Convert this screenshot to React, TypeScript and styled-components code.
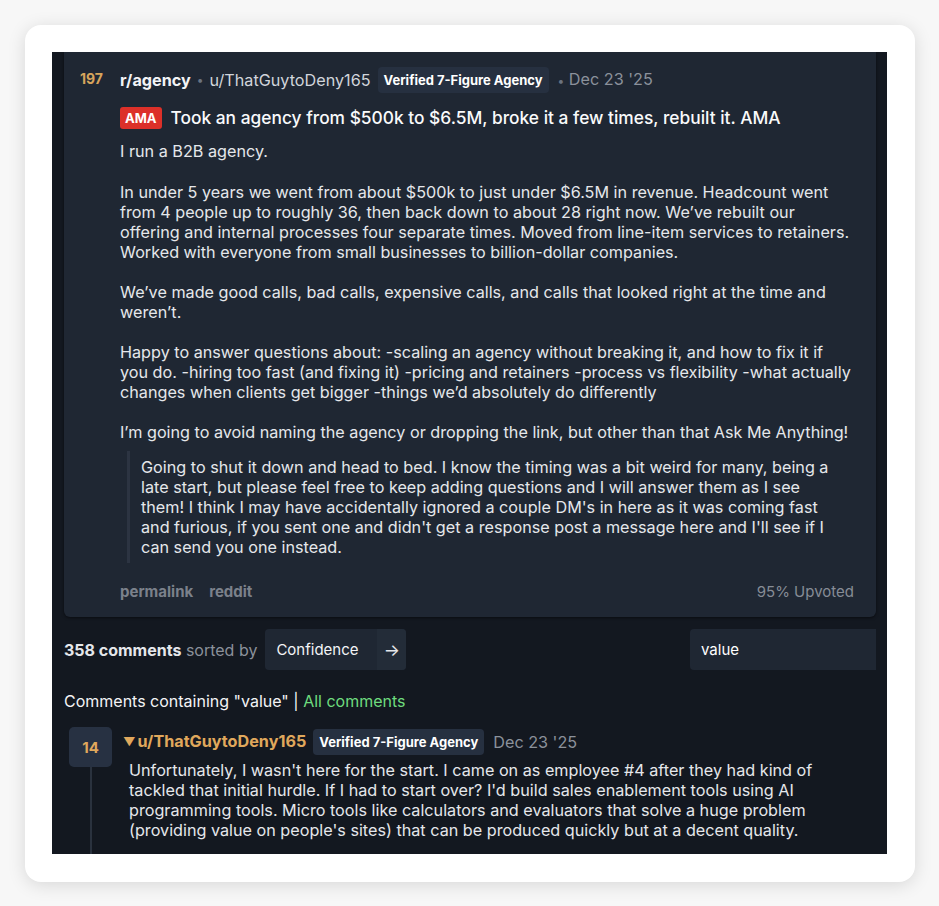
import React from 'react';
import styled, { createGlobalStyle } from 'styled-components';

const GlobalStyle = createGlobalStyle`
  html, body {
    margin: 0;
    padding: 0;
    background: #f7f7f7;
  }
  body {
    font-family: Inter, 'Noto Sans', sans-serif;
  }
`;

const paragraphs = [
  'I run a B2B agency.',
  'In under 5 years we went from about $500k to just under $6.5M in revenue. Headcount went from 4 people up to roughly 36, then back down to about 28 right now. We’ve rebuilt our offering and internal processes four separate times. Moved from line-item services to retainers. Worked with everyone from small businesses to billion-dollar companies.',
  'We’ve made good calls, bad calls, expensive calls, and calls that looked right at the time and weren’t.',
  'Happy to answer questions about: -scaling an agency without breaking it, and how to fix it if you do. -hiring too fast (and fixing it) -pricing and retainers -process vs flexibility -what actually changes when clients get bigger -things we’d absolutely do differently',
  'I’m going to avoid naming the agency or dropping the link, but other than that Ask Me Anything!',
];

const edit =
  "Going to shut it down and head to bed. I know the timing was a bit weird for many, being a late start, but please feel free to keep adding questions and I will answer them as I see them! I think I may have accidentally ignored a couple DM's in here as it was coming fast and furious, if you sent one and didn't get a response post a message here and I'll see if I can send you one instead.";

export default function App() {
  return (
    <>
      <GlobalStyle />
      <Page>
        <Card>
          <Panel>
            <Post>
              <Score>197</Score>
              <PostMain>
                <MetaRow>
                  <Sub>r/agency</Sub>
                  <Dot>•</Dot>
                  <Author>u/ThatGuytoDeny165</Author>
                  <Flair>Verified 7-Figure Agency</Flair>
                  <DateText>
                    <Dot>•</Dot> Dec 23 '25
                  </DateText>
                </MetaRow>
                <TitleRow>
                  <AmaTag>AMA</AmaTag>
                  <Title>Took an agency from $500k to $6.5M, broke it a few times, rebuilt it. AMA</Title>
                </TitleRow>
                <Body>
                  {paragraphs.map((p) => (
                    <p key={p}>{p}</p>
                  ))}
                  <Quote>{edit}</Quote>
                </Body>
                <PostFooter>
                  <FooterLinks>
                    <FooterLink>permalink</FooterLink>
                    <FooterLink>reddit</FooterLink>
                  </FooterLinks>
                  <Upvoted>95% Upvoted</Upvoted>
                </PostFooter>
              </PostMain>
            </Post>

            <Toolbar>
              <SortGroup>
                <CountText>
                  <strong>358 comments</strong> sorted by
                </CountText>
                <SortSelect>
                  <SortLabel>Confidence</SortLabel>
                  <SortArrow>→</SortArrow>
                </SortSelect>
              </SortGroup>
              <SearchBox>value</SearchBox>
            </Toolbar>

            <FilterLine>
              Comments containing "value" <Divider>|</Divider> <AllLink>All comments</AllLink>
            </FilterLine>

            <Comment>
              <VoteCol>
                <VoteBox>14</VoteBox>
                <Thread />
              </VoteCol>
              <CommentMain>
                <MetaRow>
                  <CommentAuthor>
                    <Caret>▼</Caret>u/ThatGuytoDeny165
                  </CommentAuthor>
                  <Flair>Verified 7-Figure Agency</Flair>
                  <DateText>Dec 23 '25</DateText>
                </MetaRow>
                <CommentBody>
                  Unfortunately, I wasn't here for the start. I came on as employee #4 after they had kind of
                  tackled that initial hurdle. If I had to start over? I'd build sales enablement tools using AI
                  programming tools. Micro tools like calculators and evaluators that solve a huge problem
                  (providing value on people's sites) that can be produced quickly but at a decent quality.
                </CommentBody>
              </CommentMain>
            </Comment>
          </Panel>
        </Card>
      </Page>
    </>
  );
}

const Page = styled.div`
  width: 939px;
  height: 906px;
  padding: 25px 24px 24px 25px;
  box-sizing: border-box;
`;

const Card = styled.div`
  background: #ffffff;
  border-radius: 16px;
  box-shadow: 0 3px 18px rgba(0, 0, 0, 0.13);
  padding: 27px 28px 28px 27px;
  height: 857px;
  box-sizing: border-box;
`;

const Panel = styled.div`
  background: #131820;
  height: 802px;
  overflow: hidden;
  padding: 0 11px 0 12px;
  box-sizing: border-box;
`;

const Post = styled.div`
  display: flex;
  background: #1f2733;
  border-radius: 0 0 6px 6px;
  box-shadow: 0 1px 3px rgba(0, 0, 0, 0.5);
  padding: 14px 22px 15px 16px;
`;

const Score = styled.div`
  width: 40px;
  flex-shrink: 0;
  color: #d6a45c;
  font-weight: 700;
  font-size: 14px;
  line-height: 20px;
  padding-top: 3px;
`;

const PostMain = styled.div`
  flex: 1;
  min-width: 0;
`;

const MetaRow = styled.div`
  display: flex;
  align-items: center;
  gap: 6px;
  font-size: 16.2px;
  line-height: 26px;
  white-space: nowrap;
`;

const Sub = styled.span`
  color: #f3f4f6;
  font-weight: 700;
`;

const Dot = styled.span`
  color: #6b7380;
  font-size: 12px;
`;

const Author = styled.span`
  color: #d1d5db;
`;

const Flair = styled.span`
  background: #263040;
  color: #ffffff;
  font-weight: 700;
  font-size: 13px;
  line-height: 26px;
  padding: 0 6px;
  border-radius: 4px;
  margin-left: 1px;
`;

const DateText = styled.span`
  color: #8b919b;
  margin-left: 3px;
`;

const TitleRow = styled.div`
  display: flex;
  align-items: center;
  gap: 9px;
  margin-top: 12px;
`;

const AmaTag = styled.span`
  background: #dc3029;
  color: #ffffff;
  font-weight: 700;
  font-size: 13px;
  line-height: 22px;
  padding: 0 5px;
  border-radius: 3px;
`;

const Title = styled.h1`
  margin: 0;
  color: #f9fafb;
  font-size: 17.35px;
  font-weight: 500;
  line-height: 24px;
`;

const Body = styled.div`
  margin-top: 11px;
  color: #e5e7eb;
  font-size: 16.2px;
  line-height: 20px;

  p {
    margin: 0 0 20px;
  }
  p:first-of-type {
    margin-bottom: 21px;
  }
  p:last-of-type {
    margin-bottom: 9px;
  }
`;

const Quote = styled.blockquote`
  margin: 0 0 0 7px;
  padding: 6px 10px 6px 11px;
  border-left: 3px solid #2c3442;
`;

const PostFooter = styled.div`
  display: flex;
  justify-content: space-between;
  align-items: center;
  margin-top: 19px;
  font-size: 15px;
  line-height: 20px;
`;

const FooterLinks = styled.div`
  display: flex;
  gap: 16px;
`;

const FooterLink = styled.span`
  color: #7b818b;
  font-weight: 700;
`;

const Upvoted = styled.span`
  color: #868c96;
`;

const Toolbar = styled.div`
  display: flex;
  justify-content: space-between;
  align-items: center;
  margin-top: 12px;
`;

const SortGroup = styled.div`
  display: flex;
  align-items: center;
  gap: 8px;
`;

const CountText = styled.span`
  color: #8b919b;
  font-size: 16px;

  strong {
    color: #e5e7eb;
    font-weight: 700;
  }
`;

const SortSelect = styled.div`
  display: flex;
  width: 141px;
  height: 41px;
  border-radius: 4px;
  overflow: hidden;
  background: #1f2733;
`;

const SortLabel = styled.span`
  flex: 1;
  display: flex;
  align-items: center;
  padding-left: 11px;
  color: #f3f4f6;
  font-size: 15px;
`;

const SortArrow = styled.span`
  width: 29px;
  display: flex;
  align-items: center;
  justify-content: center;
  background: #232c38;
  color: #e5e7eb;
  font-size: 17px;
`;

const SearchBox = styled.div`
  width: 186px;
  height: 41px;
  box-sizing: border-box;
  padding-left: 11px;
  display: flex;
  align-items: center;
  background: #1f2733;
  border-radius: 4px 0 0 4px;
  color: #ffffff;
  font-size: 15px;
`;

const FilterLine = styled.div`
  margin-top: 20px;
  color: #f3f4f6;
  font-size: 16px;
  line-height: 22px;
`;

const Divider = styled.span`
  color: #f3f4f6;
`;

const AllLink = styled.span`
  color: #6edc7e;
`;

const Comment = styled.div`
  display: flex;
  margin-top: 15px;
  padding-left: 5px;
`;

const VoteCol = styled.div`
  width: 43px;
  display: flex;
  flex-direction: column;
  align-items: center;
  flex-shrink: 0;
`;

const VoteBox = styled.div`
  width: 43px;
  height: 40px;
  border-radius: 5px;
  background: #273142;
  color: #e0a85c;
  font-weight: 700;
  font-size: 15px;
  display: flex;
  align-items: center;
  justify-content: center;
`;

const Thread = styled.div`
  width: 2px;
  flex: 1;
  min-height: 200px;
  background: #2a323e;
`;

const CommentMain = styled.div`
  flex: 1;
  padding-left: 11px;
  padding-top: 1px;
`;

const CommentAuthor = styled.span`
  color: #e0a85c;
  font-weight: 700;
`;

const Caret = styled.span`
  font-size: 12px;
  margin-right: 2px;
  position: relative;
  top: -1px;
`;

const CommentBody = styled.div`
  margin-top: 4px;
  padding-left: 6px;
  color: #e5e7eb;
  font-size: 16.2px;
  line-height: 20px;
  max-width: 720px;
`;
